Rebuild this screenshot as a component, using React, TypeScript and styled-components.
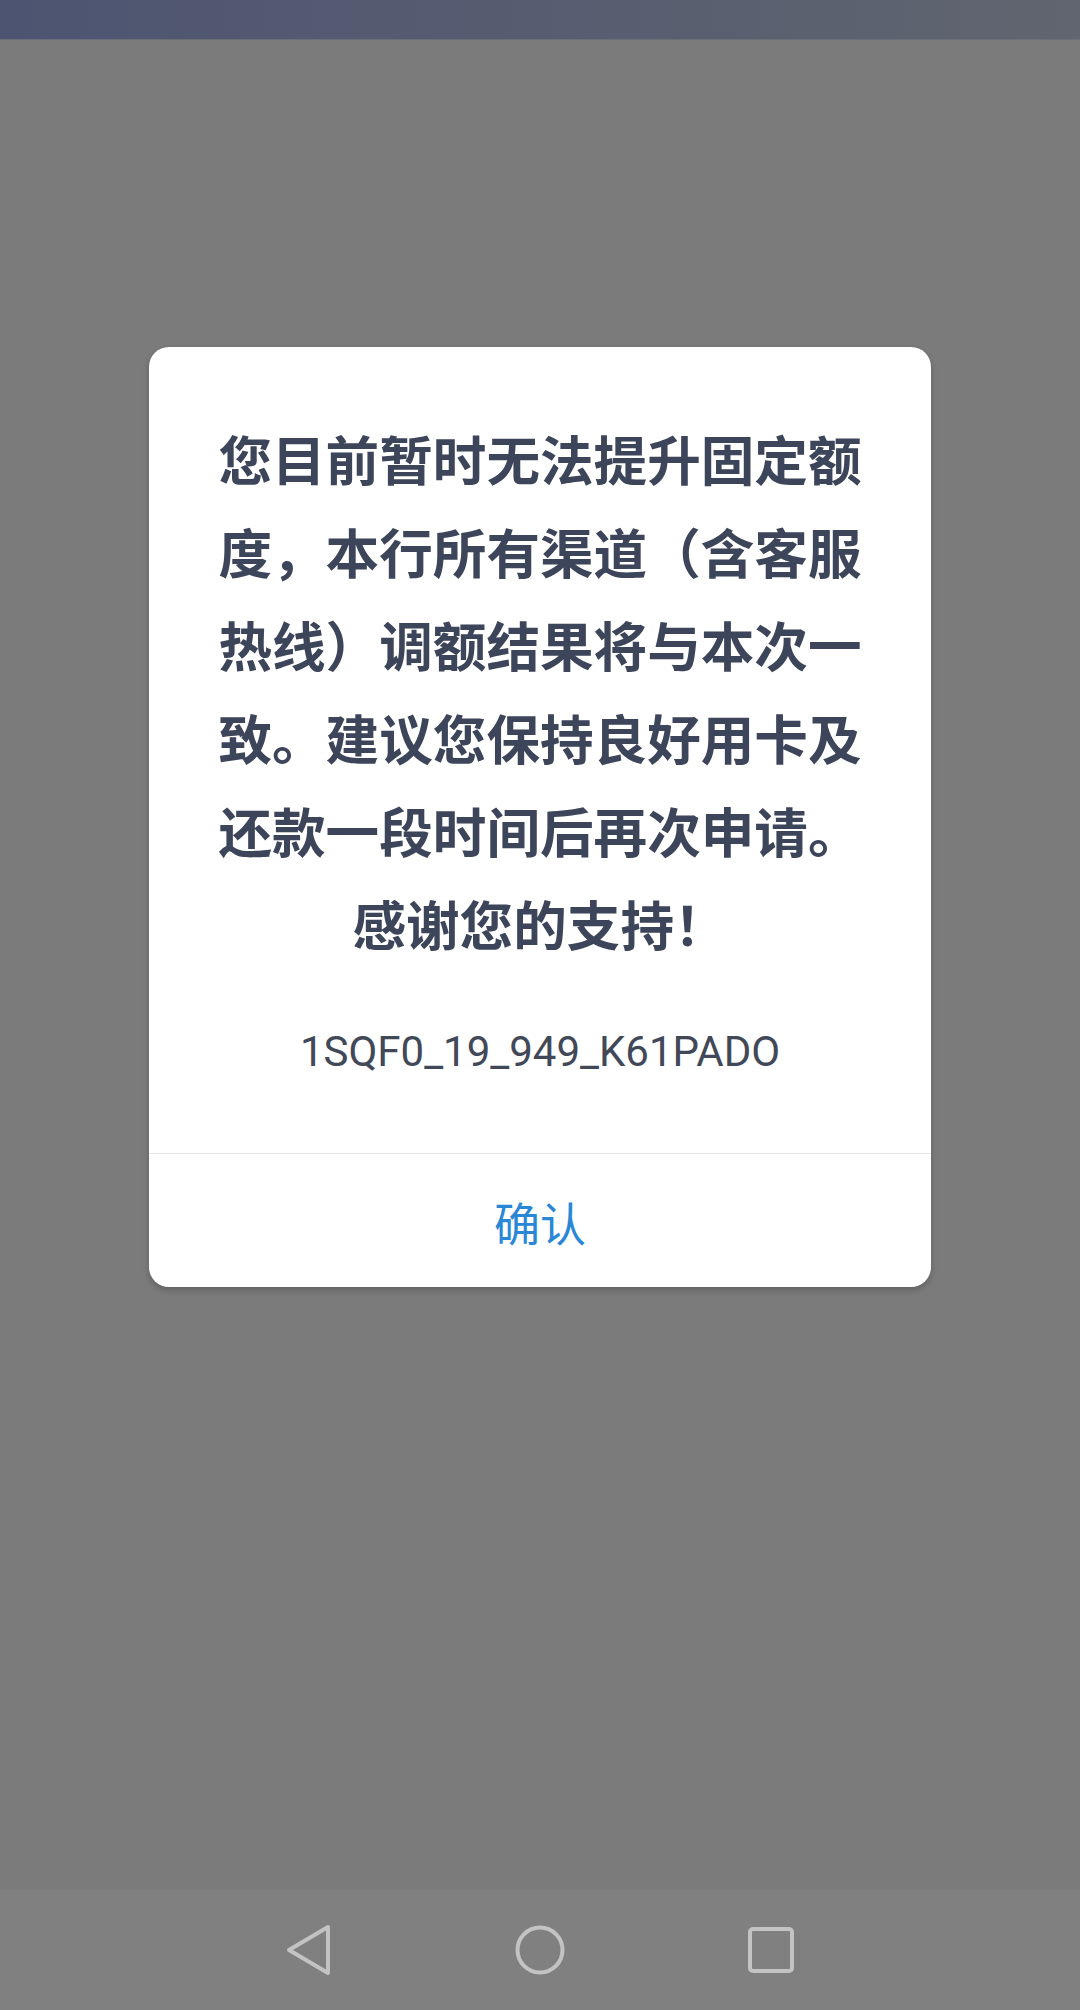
import React from "react";
import styled, { createGlobalStyle } from "styled-components";

const GlobalStyle = createGlobalStyle`
  html, body {
    margin: 0;
    padding: 0;
    background: #7b7b7b;
  }
  #root {
    width: 1080px;
    height: 2010px;
  }
`;

const Screen = styled.div`
  width: 1080px;
  height: 2010px;
  display: flex;
  flex-direction: column;
  overflow: hidden;
  background: #7b7b7b;
`;

const StatusBar = styled.div`
  height: 39px;
  flex: 0 0 39px;
  background: linear-gradient(90deg, #4d5471 0%, #565c70 45%, #60656f 100%);
  border-bottom: 1px solid #6a6f7a;
`;

const Overlay = styled.div`
  flex: 1;
  display: flex;
  justify-content: center;
  align-items: flex-start;
  padding-top: 307px;
  background: #7b7b7b;
`;

const Dialog = styled.div`
  width: 782px;
  background: #ffffff;
  border-radius: 20px;
  box-shadow: 0 3px 6px rgba(0, 0, 0, 0.22);
  display: flex;
  flex-direction: column;
  overflow: hidden;
`;

const Body = styled.div`
  padding: 64px 68px 71px;
  display: flex;
  flex-direction: column;
  align-items: center;
  gap: 53px;
`;

const Message = styled.p`
  margin: 0;
  width: 646px;
  text-align: center;
  font-family: "Noto Sans CJK SC", "Noto Sans", sans-serif;
  font-weight: 700;
  font-size: 53.6px;
  line-height: 93px;
  color: #3d455a;
  text-spacing-trim: space-all;
  word-break: normal;
`;

const Code = styled.div`
  font-family: Roboto, "Liberation Sans", sans-serif;
  font-size: 42px;
  line-height: 60px;
  color: #414858;
  text-align: center;
`;

const Footer = styled.div`
  border-top: 1px solid #e6e6e6;
  height: 133px;
  display: flex;
  align-items: center;
  justify-content: center;
`;

const ConfirmButton = styled.button`
  border: none;
  background: transparent;
  padding: 0;
  font-family: "Noto Sans CJK SC", "Noto Sans", sans-serif;
  font-size: 46px;
  font-weight: 400;
  color: #2a87d6;
  cursor: pointer;
`;

const NavBar = styled.div`
  height: 120px;
  flex: 0 0 120px;
  background: #808080;
  display: grid;
  grid-template-columns: repeat(3, 231px);
  justify-content: center;
  align-items: center;
`;

const NavSlot = styled.div`
  display: flex;
  justify-content: center;
  align-items: center;
`;

const iconColor = "#c3c3c3";

export default function App() {
  return (
    <>
      <GlobalStyle />
      <Screen>
        <StatusBar />
        <Overlay>
          <Dialog>
            <Body>
              <Message>
                您目前暂时无法提升固定额度，本行所有渠道（含客服热线）调额结果将与本次一致。建议您保持良好用卡及还款一段时间后再次申请。感谢您的支持！
              </Message>
              <Code>1SQF0_19_949_K61PADO</Code>
            </Body>
            <Footer>
              <ConfirmButton>确认</ConfirmButton>
            </Footer>
          </Dialog>
        </Overlay>
        <NavBar>
          <NavSlot>
            <svg width="46" height="52" viewBox="0 0 46 52" fill="none">
              <path
                d="M42 3 L3 26 L42 49 Z"
                stroke={iconColor}
                strokeWidth="4"
                strokeLinejoin="round"
              />
            </svg>
          </NavSlot>
          <NavSlot>
            <svg width="52" height="52" viewBox="0 0 52 52" fill="none">
              <circle cx="26" cy="26" r="22.5" stroke={iconColor} strokeWidth="4" />
            </svg>
          </NavSlot>
          <NavSlot>
            <svg width="48" height="48" viewBox="0 0 48 48" fill="none">
              <rect x="3" y="3" width="42" height="42" rx="3" stroke={iconColor} strokeWidth="4" />
            </svg>
          </NavSlot>
        </NavBar>
      </Screen>
    </>
  );
}
